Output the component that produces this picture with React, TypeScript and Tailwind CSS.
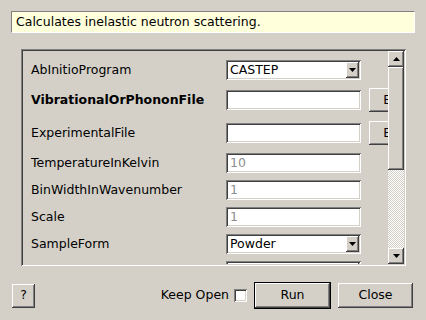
import React from "react";

const FONT = { fontFamily: '"DejaVu Sans", "Liberation Sans", sans-serif' };

const sunken =
  "shadow-[inset_1px_1px_0_#808080,inset_-1px_-1px_0_#ffffff,inset_2px_2px_0_#404040,inset_-2px_-2px_0_#d4d0c8]";
const raised =
  "shadow-[inset_-1px_-1px_0_#404040,inset_1px_1px_0_#ffffff,inset_-2px_-2px_0_#808080,inset_2px_2px_0_#d4d0c8]";

function Tri({ up }: { up?: boolean }) {
  return (
    <svg width="7" height="4" viewBox="0 0 7 4">
      {up ? <polygon points="3.5,0 7,4 0,4" fill="#000" /> : <polygon points="0,0 7,0 3.5,4" fill="#000" />}
    </svg>
  );
}

function Combo({ value }: { value: string }) {
  return (
    <div className={`w-[135px] shrink-0 h-[20px] bg-white ${sunken} flex items-center pl-[4px] pr-[2px]`}>
      <span className="flex-1 text-black">{value}</span>
      <div className={`w-[13px] h-[16px] bg-[#d4d0c8] ${raised} flex items-center justify-center`}>
        <Tri />
      </div>
    </div>
  );
}

function Field({ value, disabled }: { value?: string; disabled?: boolean }) {
  return (
    <div className={`w-[135px] shrink-0 h-[20px] bg-white ${sunken} flex items-center pl-[4px]`}>
      <span className={disabled ? "text-[#8e8e8e]" : "text-black"}>{value}</span>
    </div>
  );
}

function Row({ label, bold, children, h, mt }: { label: string; bold?: boolean; children: React.ReactNode; h: string; mt: string }) {
  return (
    <div className={`flex items-center shrink-0 w-max ${h} ${mt}`}>
      <div className={`w-[195px] shrink-0 whitespace-nowrap pt-[1px] ${bold ? "font-bold" : ""}`}>{label}</div>
      {children}
    </div>
  );
}

export default function App() {
  return (
    <div className="w-[426px] h-[320px] bg-[#d4d0c8] flex flex-col text-[12px] text-black overflow-hidden" style={FONT}>
      <div className="mt-[11px] ml-[11px] w-[404px] h-[22px] bg-[#ffffdc] border-t border-l border-[#808080] border-b-white border-r-white border-b border-r flex items-center pl-[4px] text-[12.5px]">
        Calculates inelastic neutron scattering.
      </div>

      <div className={`mt-[16px] ml-[21px] w-[385px] h-[217px] ${sunken} p-[2px] flex`}>
        <div className="flex-1 min-w-0 overflow-hidden flex flex-col pt-[9px] pl-[8px] text-[12.5px]">
          <Row label="AbInitioProgram" h="h-[20px]" mt="mt-0">
            <Combo value="CASTEP" />
          </Row>
          <Row label="VibrationalOrPhononFile" bold h="h-[24px]" mt="mt-[8px]">
            <Field />
            <div className={`ml-[8px] w-[74px] h-[24px] shrink-0 bg-[#d4d0c8] ${raised} flex items-center justify-center`}>Browse</div>
          </Row>
          <Row label="ExperimentalFile" h="h-[24px]" mt="mt-[9px]">
            <Field />
            <div className={`ml-[8px] w-[74px] h-[24px] shrink-0 bg-[#d4d0c8] ${raised} flex items-center justify-center`}>Browse</div>
          </Row>
          <Row label="TemperatureInKelvin" h="h-[20px]" mt="mt-[8px]">
            <Field value="10" disabled />
          </Row>
          <Row label="BinWidthInWavenumber" h="h-[20px]" mt="mt-[7px]">
            <Field value="1" disabled />
          </Row>
          <Row label="Scale" h="h-[20px]" mt="mt-[7px]">
            <Field value="1" disabled />
          </Row>
          <Row label="SampleForm" h="h-[20px]" mt="mt-[7px]">
            <Combo value="Powder" />
          </Row>
          <Row label="" h="h-[20px]" mt="mt-[7px]">
            <Combo value="" />
          </Row>
        </div>
        <div className="w-[16px] shrink-0 flex flex-col">
          <div className={`h-[16px] bg-[#d4d0c8] ${raised} flex items-center justify-center`}>
            <Tri up />
          </div>
          <div className={`h-[103px] bg-[#d4d0c8] ${raised}`} />
          <div className="flex-1 bg-[repeating-conic-gradient(#ffffff_0%_25%,#d4d0c8_0%_50%)] bg-[length:2px_2px]" />
          <div className={`h-[16px] bg-[#d4d0c8] ${raised} flex items-center justify-center`}>
            <Tri />
          </div>
        </div>
      </div>

      <div className="mt-[16px] flex items-center h-[27px] pl-[12px] pr-[13px] text-[12.5px]">
        <div className={`w-[23px] h-[24px] bg-[#d4d0c8] ${raised} flex items-center justify-center`}>?</div>
        <div className="flex-1" />
        <span>Keep Open</span>
        <div className={`ml-[5px] w-[13px] h-[13px] bg-white ${sunken}`} />
        <div className="ml-[7px] w-[77px] h-[27px] border border-black">
          <div className={`w-full h-full bg-[#d4d0c8] ${raised} flex items-center justify-center`}>Run</div>
        </div>
        <div className={`ml-[7px] w-[75px] h-[25px] bg-[#d4d0c8] ${raised} flex items-center justify-center`}>Close</div>
      </div>
    </div>
  );
}
